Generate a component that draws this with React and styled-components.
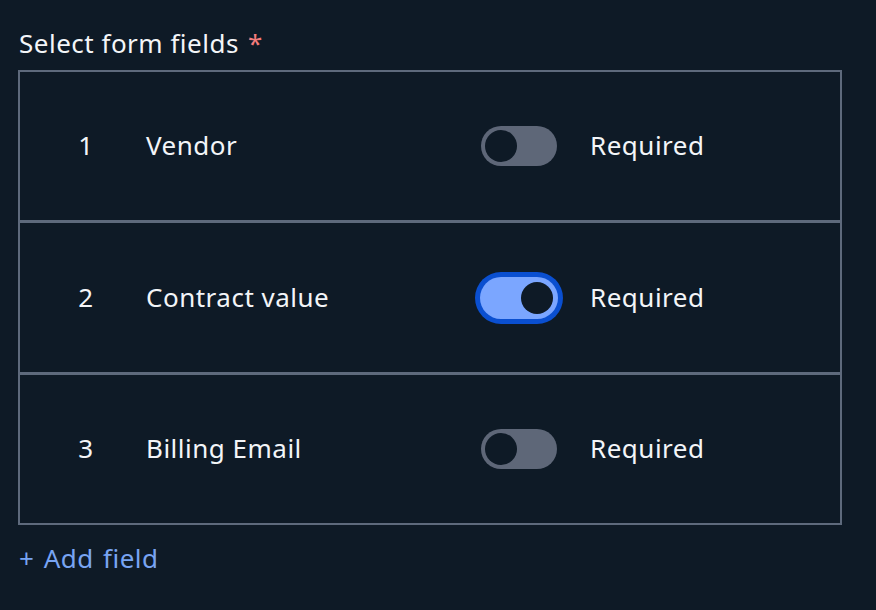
import React, { useState } from "react";
import styled, { createGlobalStyle } from "styled-components";

const Global = createGlobalStyle`
  html, body { margin: 0; padding: 0; background: #0e1a26; }
  body { font-family: "Noto Sans", "Open Sans", sans-serif; color: #f3f5f8; letter-spacing: 0.5px; }
  * { box-sizing: border-box; }
`;

const Page = styled.div`
  min-height: 610px;
  padding: 26px 0 0 18px;
  width: 842px;
`;

const Title = styled.div`
  font-size: 26px;
  line-height: 34px;
  margin: 0 0 10px 1px;
  color: #f3f5f8;
`;

const Star = styled.span`
  color: #f47c7c;
  margin-left: 9px;
`;

const List = styled.div`
  border: 2px solid #5e6a7c;
  display: flex;
  flex-direction: column;
`;

const Row = styled.div`
  display: flex;
  align-items: center;
  height: ${(p) => p.$h}px;
  border-top: ${(p) => (p.$first ? "none" : "3px solid #5e6a7c")};
  padding-left: 48px;
  padding-bottom: 2px;
  font-size: 26px;
`;

const Num = styled.div`
  width: 36px;
  text-align: center;
`;

const Label = styled.div`
  width: 335px;
  margin-left: 42px;
`;

const Track = styled.button`
  width: 76px;
  height: 40px;
  margin-top: 2px;
  border-radius: 20px;
  border: none;
  padding: 4px;
  display: flex;
  justify-content: ${(p) => (p.$on ? "flex-end" : "flex-start")};
  background: ${(p) => (p.$on ? "#7ba6ff" : "#5e6778")};
  box-shadow: ${(p) => (p.$on ? "0 0 0 1px #7ba6ff, 0 0 0 6px #0a4fd0" : "none")};
  cursor: pointer;
`;

const Knob = styled.span`
  width: 32px;
  height: 32px;
  border-radius: 50%;
  background: #0e1a26;
`;

const Req = styled.div`
  margin-left: 33px;
`;

const Add = styled.div`
  margin-top: 16px;
  font-size: 26px;
  line-height: 34px;
  color: #78a4f2;
  margin-left: 1px;
  word-spacing: 2px;
`;

const fields = [
  { name: "Vendor", h: 148 },
  { name: "Contract value", h: 152 },
  { name: "Billing Email", h: 151 },
];

export default function App() {
  const [on, setOn] = useState([false, true, false]);
  return (
    <>
      <Global />
      <Page>
        <Title>
          Select form fields<Star>*</Star>
        </Title>
        <List>
          {fields.map((f, i) => (
            <Row key={f.name} $first={i === 0} $h={f.h}>
              <Num>{i + 1}</Num>
              <Label>{f.name}</Label>
              <Track
                $on={on[i]}
                onClick={() => setOn(on.map((v, j) => (j === i ? !v : v)))}
              >
                <Knob />
              </Track>
              <Req>Required</Req>
            </Row>
          ))}
        </List>
        <Add>+ Add field</Add>
      </Page>
    </>
  );
}
